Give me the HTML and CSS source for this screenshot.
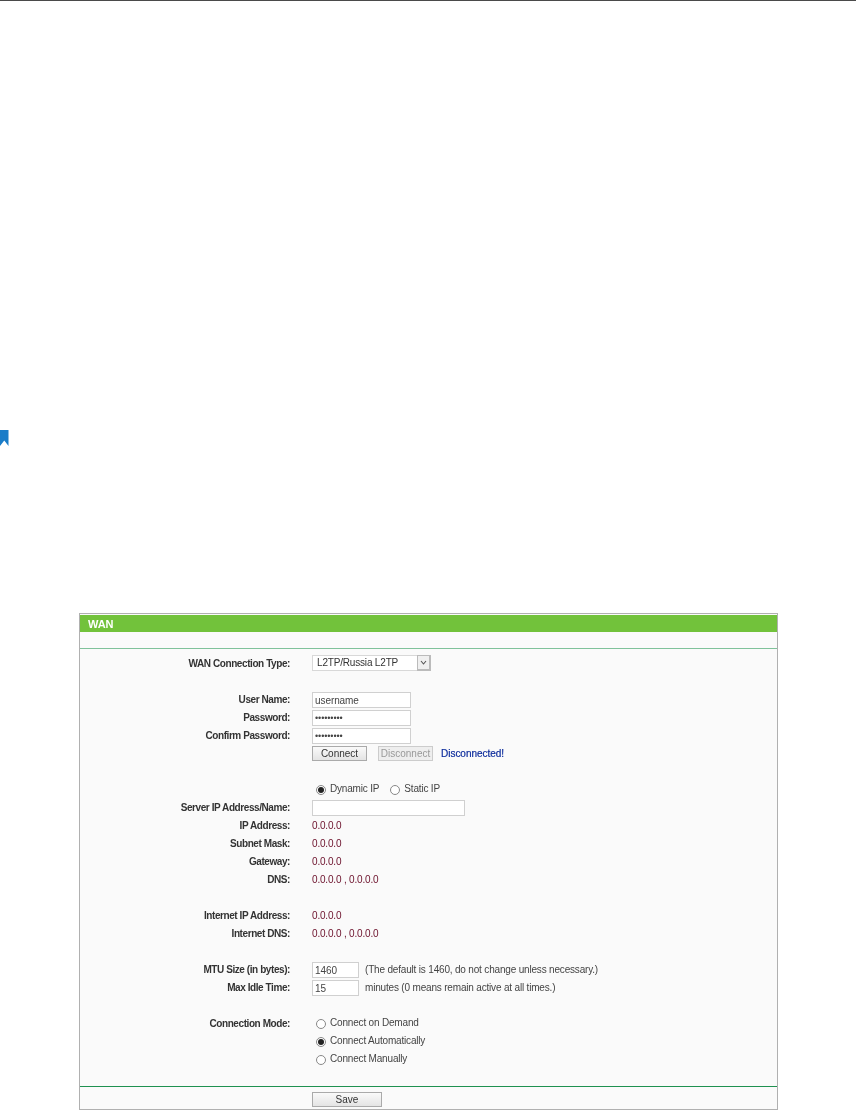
FILE: index.html
```html
<!DOCTYPE html>
<html lang="en">
<head>
<meta charset="utf-8">
<title>WAN</title>
<link rel="stylesheet" href="styles.css">
</head>
<body>
<div class="top-rule"></div>
<div class="bookmark-row">
  <svg class="bookmark" width="9" height="16" viewBox="0 0 9 16"><path d="M0 0H8.5V16L4.25 10.5L0 16Z" fill="#1a7cc8"/></svg>
</div>
<section class="panel">
  <h1 class="panel-title">WAN</h1>
  <div class="subtitle-band"></div>
  <form class="form">
    <div class="row"><label class="lbl">WAN Connection Type:</label>
      <div class="val"><div class="select"><span class="select-text">L2TP/Russia L2TP</span><span class="select-arrow"><svg width="7" height="5" viewBox="0 0 7 5"><path d="M1 1L3.5 4L6 1" fill="none" stroke="#555" stroke-width="1.1"/></svg></span></div></div></div>
    <div class="row"></div>
    <div class="row"><label class="lbl">User Name:</label><div class="val"><input class="field w99" value="username"></div></div>
    <div class="row"><label class="lbl">Password:</label><div class="val"><input class="field w99 pw" type="password" value="password1"></div></div>
    <div class="row"><label class="lbl">Confirm Password:</label><div class="val"><input class="field w99 pw" type="password" value="password1"></div></div>
    <div class="row"><div class="lbl"></div><div class="val"><button type="button" class="btn btn-connect">Connect</button><button type="button" class="btn btn-disabled">Disconnect</button><span class="status">Disconnected!</span></div></div>
    <div class="row"></div>
    <div class="row"><div class="lbl"></div><div class="val radios"><span class="radio on"></span><span class="rtext">Dynamic IP</span><span class="radio second"></span><span class="rtext">Static IP</span></div></div>
    <div class="row"><label class="lbl">Server IP Address/Name:</label><div class="val"><input class="field w153"></div></div>
    <div class="row"><label class="lbl">IP Address:</label><div class="val ip">0.0.0.0</div></div>
    <div class="row"><label class="lbl">Subnet Mask:</label><div class="val ip">0.0.0.0</div></div>
    <div class="row"><label class="lbl">Gateway:</label><div class="val ip">0.0.0.0</div></div>
    <div class="row"><label class="lbl">DNS:</label><div class="val ip">0.0.0.0 , 0.0.0.0</div></div>
    <div class="row"></div>
    <div class="row"><label class="lbl">Internet IP Address:</label><div class="val ip">0.0.0.0</div></div>
    <div class="row"><label class="lbl">Internet DNS:</label><div class="val ip">0.0.0.0 , 0.0.0.0</div></div>
    <div class="row"></div>
    <div class="row"><label class="lbl">MTU Size (in bytes):</label><div class="val"><input class="field w47" value="1460"><span class="hint">(The default is 1460, do not change unless necessary.)</span></div></div>
    <div class="row"><label class="lbl">Max Idle Time:</label><div class="val"><input class="field w47" value="15"><span class="hint">minutes (0 means remain active at all times.)</span></div></div>
    <div class="row"></div>
    <div class="row"><label class="lbl">Connection Mode:</label><div class="val radios"><span class="radio"></span><span class="rtext">Connect on Demand</span></div></div>
    <div class="row"><div class="lbl"></div><div class="val radios"><span class="radio on"></span><span class="rtext">Connect Automatically</span></div></div>
    <div class="row"><div class="lbl"></div><div class="val radios"><span class="radio"></span><span class="rtext">Connect Manually</span></div></div>
  </form>
  <div class="footer"><button type="button" class="btn btn-save">Save</button></div>
</section>
</body>
</html>
```
FILE: styles.css
```css
* { box-sizing: border-box; }
html, body { margin: 0; padding: 0; background: #fff; }
body { font-family: "Liberation Sans", Arial, sans-serif; font-size: 10px; letter-spacing: -0.18px; color: #333; width: 856px; height: 1110px; overflow: hidden; }
.top-rule { height: 1px; background: #4a4a4a; }
.bookmark-row { height: 612px; padding-top: 429px; }
.bookmark { display: block; }
.panel { width: 699px; height: 497px; margin-left: 79px; border: 1px solid #b0b0b0; background: #fafafa; padding-top: 1px; filter: blur(0.4px); }
.panel-title { margin: 0; height: 17px; line-height: 18px; background: #72c23b; color: #fff; font-size: 11px; letter-spacing: -0.1px; font-weight: bold; padding-left: 8px; }
.subtitle-band { height: 17px; border-bottom: 1px solid #7fc29a; }
.form { padding-top: 5px; height: 438px; border-bottom: 1px solid #1f9150; }
.row { display: flex; height: 18px; align-items: center; }
.lbl { width: 210px; text-align: right; font-weight: bold; letter-spacing: -0.42px; color: #333; white-space: nowrap; flex: none; padding-top: 1px; }
.val { margin-left: 22px; display: flex; align-items: center; white-space: nowrap; color: #444; height: 18px; }
.ip { color: #6b0f2a; }
.field { height: 16px; border: 1px solid #d0d0d0; background: #fff; font: 10px "Liberation Sans", Arial, sans-serif; letter-spacing: -0.08px; color: #444; padding: 0 2px; margin: 2px 0 0; outline: none; }
.w99 { width: 99px; }
.w153 { width: 153px; }
.w47 { width: 47px; }
.pw { font-size: 9px; }
.hint { margin-left: 6px; color: #444; }
.select { width: 119px; height: 16px; display: flex; background: #fff; border: 1px solid #d8d8d8; }
.select-text { flex: 1; line-height: 13px; padding-left: 4px; color: #333; }
.select-arrow { width: 14px; display: flex; align-items: center; justify-content: center; background: #f0f0f0; border: 1px solid #bbb; border-width: 1px 2px 2px 1px; margin: -1px -1px -1px 0; }
.btn { font: 10px "Liberation Sans", Arial, sans-serif; letter-spacing: 0; height: 15px; padding: 0; margin: 0; color: #333; border: 1px solid #aaa; background: linear-gradient(#fafafa, #e4e4e4); }
.btn-connect { width: 55px; }
.btn-disabled { width: 55px; margin-left: 11px; color: #999; border-color: #ccc; background: #eee; }
.status { margin-left: 8px; letter-spacing: -0.02px; color: #0d2c9c; -webkit-text-stroke: 0.2px #0d2c9c; }
.radios { padding-left: 4px; }
.radio { width: 10px; height: 10px; border: 1px solid #888; border-radius: 50%; background: #fff; flex: none; margin-top: 2px; display: flex; align-items: center; justify-content: center; }
.radio.on::after { content: ""; width: 6px; height: 6px; border-radius: 50%; background: #222; }
.radio.second { margin-left: 11px; }
.rtext { margin-left: 4px; margin-top: -2px; }
.footer { height: 20px; padding: 5px 0 0 232px; }
.btn-save { width: 70px; height: 15px; }
```
